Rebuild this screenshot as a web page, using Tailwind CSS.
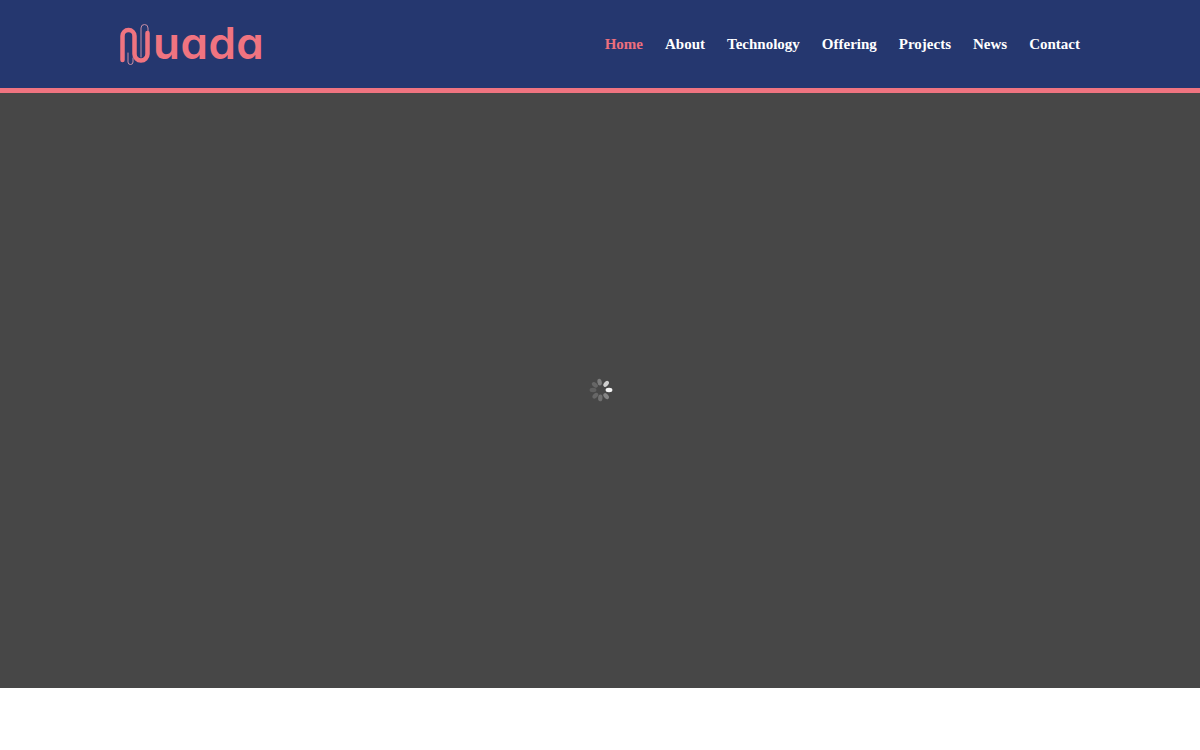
<!DOCTYPE html>
<html lang="en">
<head>
    <meta charset="UTF-8">
    <meta name="viewport" content="width=device-width, initial-scale=1.0">
    <title>Nuada</title>
    <script src="https://cdn.jsdelivr.net/npm/@tailwindcss/browser@4"></script>
</head>
<body class="bg-white min-h-screen font-['Liberation_Serif',serif]">
    <header class="h-[93px] bg-[#25376f] border-b-5 border-[#f07480]">
        <div class="w-[960px] h-full mx-auto flex items-center justify-between">
            <a href="#" class="flex items-center text-[#f07480]">
                <svg width="32" height="44" viewBox="0 0 32 44" fill="none" stroke="currentColor" stroke-linecap="round" class="mt-[1px]">
                    <path stroke-width="1" stroke="#c98fa6" d="M8 30v9a2.5 2.5 0 0 0 5 0v-4M21 34V5a3.5 3.5 0 0 1 7 0v6"/>
                    <path stroke-width="4.5" d="M2.5 37V13a6 6 0 0 1 12 0v18a6.5 6.5 0 0 0 13 0V10"/>
                </svg>
                <span class="ml-[1px] mt-[-2px] text-[44px] leading-none font-semibold tracking-[0.5px] font-['Inter',sans-serif] [font-feature-settings:'cv11']">uada</span>
            </a>
            <nav class="flex items-center gap-[22px] text-[15px] font-bold text-white">
                <a href="#" class="text-[#ee6f7d]">Home</a>
                <a href="#">About</a>
                <a href="#">Technology</a>
                <a href="#">Offering</a>
                <a href="#">Projects</a>
                <a href="#">News</a>
                <a href="#">Contact</a>
            </nav>
        </div>
    </header>

    <main class="h-[595px] bg-[#474747] flex items-center justify-center">
        <svg width="26" height="26" viewBox="-13 -13 26 26" class="ml-[2px] mb-[2px] blur-[0.6px]">
            <ellipse cx="8" cy="0" rx="3.4" ry="2.2" fill="#f5f5f5" />
            <ellipse cx="8" cy="0" rx="3.4" ry="2.2" fill="#cfcfcf" transform="rotate(-50)" />
            <ellipse cx="8" cy="0" rx="3.4" ry="2.2" fill="#7d7d7d" transform="rotate(-100)" />
            <ellipse cx="8" cy="0" rx="3.4" ry="2.2" fill="#666" transform="rotate(-140)" />
            <ellipse cx="8" cy="0" rx="3.4" ry="2.2" fill="#5f5f5f" transform="rotate(180)" />
            <ellipse cx="8" cy="0" rx="3.4" ry="2.2" fill="#666" transform="rotate(135)" />
            <ellipse cx="8" cy="0" rx="3.4" ry="2.2" fill="#707070" transform="rotate(95)" />
            <ellipse cx="8" cy="0" rx="3.4" ry="2.2" fill="#858585" transform="rotate(50)" />
        </svg>
    </main>
</body>
</html>
